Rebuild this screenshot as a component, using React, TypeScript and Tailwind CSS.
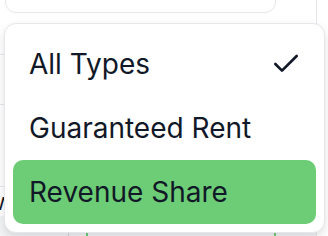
import { Check } from 'lucide-react'

const options = ['All Types', 'Guaranteed Rent', 'Revenue Share']

export default function App() {
    const selected = 'All Types'
    const highlighted = 'Revenue Share'

    return (
        <div className="relative h-[236px] w-[328px] overflow-hidden bg-white font-['Inter',sans-serif] text-[#111827]">
            {/* Page behind the menu */}
            <div className="flex h-full w-[317px] flex-col border-r border-[#e5e7eb]">
                <div className="ml-[5px] mt-[-40px] h-[53px] w-[271px] shrink-0 rounded-[11px] border border-[#e5e7eb] bg-white" />
                <div className="mt-[41px] h-px w-full shrink-0 bg-[#e5e7eb]" />
                <div className="mt-[49px] h-px w-full shrink-0 bg-[#e5e7eb]" />
                <div className="mt-[81px] flex h-[30px] shrink-0 items-center border-t border-[#e5e7eb]">
                    <span className="ml-[-6px] text-[24px] leading-none">w</span>
                </div>
                <div className="relative flex-1 bg-[#f3f4f6]">
                    <div className="absolute left-[68px] top-0 h-full w-px bg-[#d1d5db]" />
                    <div className="absolute left-[86px] top-0 h-full w-[2px] bg-[#6dcd76]" />
                    <div className="absolute left-[274px] top-0 h-full w-[2px] bg-[#6dcd76]" />
                </div>
            </div>

            {/* Select dropdown */}
            <div className="absolute left-[4px] top-[23px] w-[321px] rounded-[12px] border border-[#e5e7eb] bg-white p-[8px] shadow-[0_4px_10px_rgba(0,0,0,0.12)]">
                {options.map((opt) => (
                    <div
                        key={opt}
                        className={`relative flex h-[64px] items-center rounded-[10px] pl-[16px] pr-[64px] text-[28px] leading-[40px] ${opt === highlighted ? 'bg-[#6dcd76]' : ''}`}
                    >
                        {opt}
                        {opt === selected && (
                            <span className="absolute right-[14px] top-[16px] flex h-[32px] w-[32px] items-center justify-center">
                                <Check size={32} strokeWidth={2} />
                            </span>
                        )}
                    </div>
                ))}
            </div>
        </div>
    )
}
